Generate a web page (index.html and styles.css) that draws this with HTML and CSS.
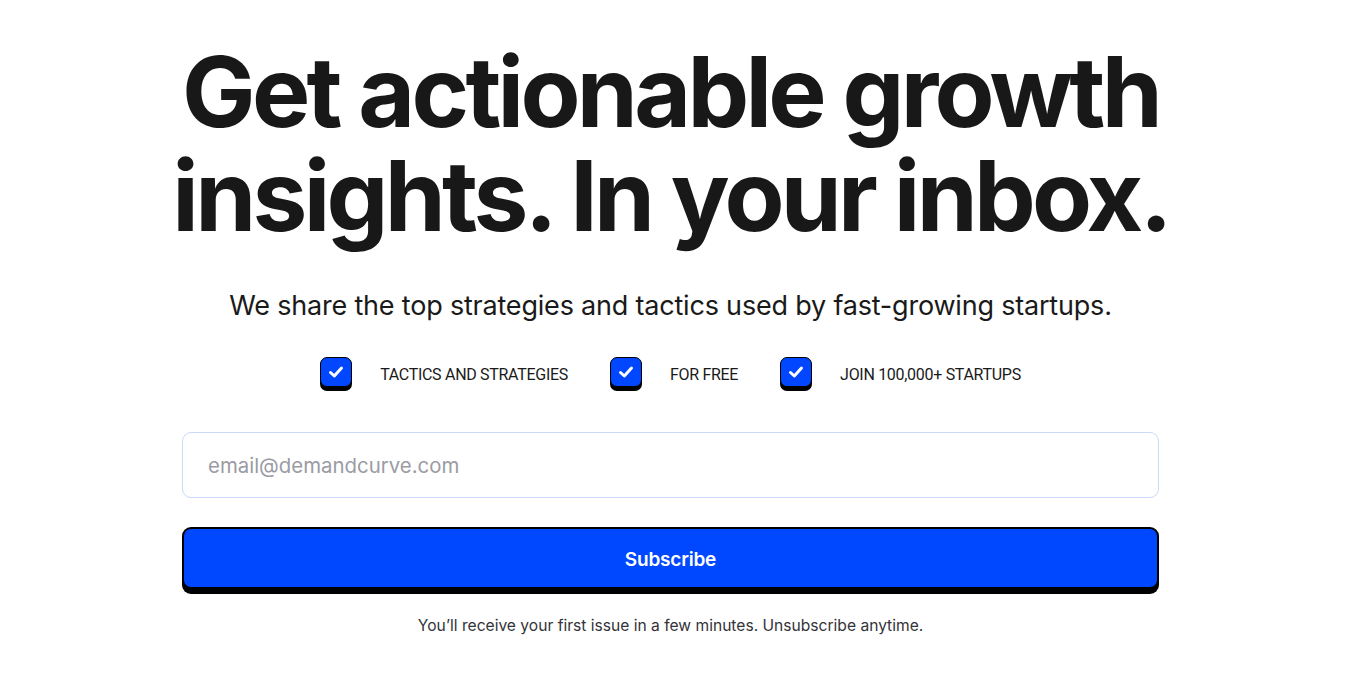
FILE: index.html
```html
<!DOCTYPE html>
<html lang="en">
<head>
<meta charset="utf-8">
<title>Demand Curve Newsletter</title>
<link rel="stylesheet" href="styles.css">
</head>
<body>
<main class="page">
  <section class="hero">
    <h1 class="title">Get actionable growth<br>insights. In your inbox.</h1>
    <p class="lead">We share the top strategies and tactics used by fast-growing startups.</p>
    <ul class="perks">
      <li class="perk">
        <span class="check"><svg viewBox="0 0 20 20" width="20" height="20"><path d="M4.5 10.5 L8.3 14 L15.5 6" fill="none" stroke="#fff" stroke-width="3" stroke-linecap="round" stroke-linejoin="round"/></svg></span>
        <span class="perk-label">TACTICS AND STRATEGIES</span>
      </li>
      <li class="perk">
        <span class="check"><svg viewBox="0 0 20 20" width="20" height="20"><path d="M4.5 10.5 L8.3 14 L15.5 6" fill="none" stroke="#fff" stroke-width="3" stroke-linecap="round" stroke-linejoin="round"/></svg></span>
        <span class="perk-label">FOR FREE</span>
      </li>
      <li class="perk">
        <span class="check"><svg viewBox="0 0 20 20" width="20" height="20"><path d="M4.5 10.5 L8.3 14 L15.5 6" fill="none" stroke="#fff" stroke-width="3" stroke-linecap="round" stroke-linejoin="round"/></svg></span>
        <span class="perk-label">JOIN 100,000+ STARTUPS</span>
      </li>
    </ul>
    <form class="signup">
      <input class="email" type="email" placeholder="email@demandcurve.com">
      <button class="subscribe" type="button">Subscribe</button>
    </form>
    <p class="note">You’ll receive your first issue in a few minutes. Unsubscribe anytime.</p>
  </section>
</main>
</body>
</html>
```
FILE: styles.css
```css
* { box-sizing: border-box; }
html, body { margin: 0; padding: 0; background: #fff; }
body { font-family: Inter, "Liberation Sans", sans-serif; color: #1a1a1a; }
.page { display: flex; justify-content: center; padding-right: 25px; }
.hero { width: 977px; display: flex; flex-direction: column; align-items: center; }
.title {
  margin: 40px 0 0;
  font-family: Inter, sans-serif;
  font-weight: 700;
  font-size: 98px;
  line-height: 104px;
  letter-spacing: -3.7px;
  text-align: center;
  color: #181818;
  white-space: nowrap;
}
.lead { margin: 40px 0 0; font-size: 27px; line-height: 36px; color: #1a1a1a; letter-spacing: -0.2px; }
.perks { list-style: none; margin: 33px 0 0; padding: 0; display: flex; gap: 42px; }
.perk { display: flex; align-items: center; gap: 28px; }
.check {
  width: 32px; height: 30px;
  background: #0047ff;
  border: 1px solid #000;
  border-radius: 7px;
  box-shadow: 0 4px 0 #000;
  display: flex; align-items: center; justify-content: center;
  margin-bottom: 4px;
}
.perk-label { font-family: Roboto, sans-serif; font-size: 16px; letter-spacing: -0.3px; color: #1a1a1a; }
.signup { width: 100%; margin-top: 41px; display: flex; flex-direction: column; gap: 29px; }
.email {
  width: 100%; height: 66px;
  border: 1px solid #cad9f8; border-radius: 9px;
  padding: 0 25px;
  font-family: Inter, sans-serif; font-size: 20.4px; color: #1a1a1a;
  outline: none; background: #fff;
}
.email::placeholder { color: #9b9ba3; }
.subscribe {
  width: 100%; height: 62px;
  padding: 2px 0 0;
  background: #0048ff; color: #fff;
  border: 2px solid #000; border-radius: 9px;
  box-shadow: 0 5px 0 #000;
  font-family: Inter, sans-serif; font-weight: 600; font-size: 19px; letter-spacing: -0.2px;
}
.note { margin: 27px 0 0; font-size: 15.6px; color: #333338; }
```
